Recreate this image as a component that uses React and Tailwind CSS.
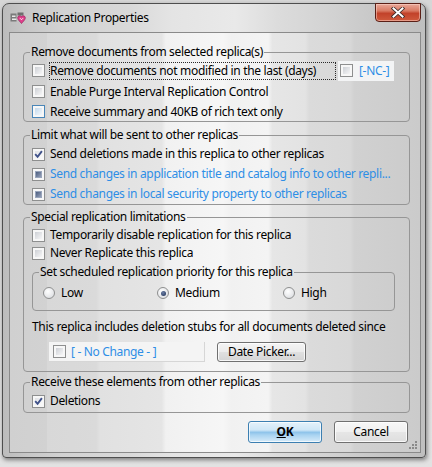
import React from "react";

function Check({ state = "off" }) {
  const outer = state === "hover" ? "border-[#4a86b8]" : "border-[#8e8f8f]";
  let inner;
  if (state === "mixed") {
    inner = <span className="h-full w-full border border-[#9aa6bc] bg-[linear-gradient(135deg,#4d5f80,#94a0b8)]" />;
  } else if (state === "hover") {
    inner = <span className="h-full w-full bg-[linear-gradient(135deg,#c4d9ec,#f3f8fc)]" />;
  } else if (state === "on") {
    inner = <span className="h-full w-full bg-[linear-gradient(135deg,#dfe1e5,#fbfbfb)]" />;
  } else {
    inner = <span className="h-full w-full bg-[linear-gradient(135deg,#cdd0d5,#f6f6f7)]" />;
  }
  return (
    <span className={`relative flex h-[13px] w-[13px] shrink-0 border ${outer} bg-[#f7f7f7] p-[2px]`}>
      {inner}
      {state === "on" && (
        <svg className="absolute left-0 top-0" width="11" height="11" viewBox="0 0 11 11">
          <path d="M2.2 5.2 L4.6 7.8 L8.9 2.2" fill="none" stroke="#3f5189" strokeWidth="1.9" strokeLinejoin="miter" />
        </svg>
      )}
    </span>
  );
}

function Radio({ on }) {
  return (
    <span className="flex h-[12px] w-[12px] shrink-0 items-center justify-center rounded-full border border-[#8e8f8f] bg-[radial-gradient(circle_at_40%_35%,#ffffff,#d5d7db)]">
      {on && <span className="h-[5px] w-[5px] rounded-full bg-[radial-gradient(circle_at_40%_35%,#6b7fa6,#1b2c52)]" />}
    </span>
  );
}

function Group({ title, className, children }) {
  return (
    <fieldset className={`rounded-[4px] border border-[#969696] pl-[8px] ${className}`}>
      <legend className="-ml-[2px] px-[1px] leading-[16px] whitespace-nowrap">{title}</legend>
      {children}
    </fieldset>
  );
}

function Row({ h, state, blue, children }) {
  return (
    <div className={`flex items-center gap-[4px] ${h}`}>
      <Check state={state} />
      <span className={`border border-transparent leading-[16px] whitespace-nowrap ${blue ? "text-[#2e8ee6]" : "text-black"}`}>
        {children}
      </span>
    </div>
  );
}

function WinButton({ className, children }) {
  return (
    <div
      className={`flex items-center justify-center rounded-[3px] border border-[#707070] bg-[linear-gradient(180deg,#f4f4f4_0%,#ececec_48%,#e0e0e0_52%,#d4d4d4_100%)] shadow-[inset_0_0_0_1px_rgba(255,255,255,0.8)] leading-[16px] ${className}`}
    >
      {children}
    </div>
  );
}

export default function App() {
  return (
    <div className="h-[467px] w-[432px] overflow-hidden bg-[linear-gradient(180deg,#d6d6d6,#e2e2e2)] pl-[2px] pt-[3px] font-['Noto_Sans',sans-serif] text-[12px] tracking-[-0.33px] text-black">
      <div className="flex h-[455px] w-[424px] flex-col rounded-b-[4px] rounded-t-[7px] border border-[#4e4e4e] bg-[linear-gradient(90deg,#bcbcbc_0%,#c8c8c8_6%,#d2d2d2_14%,#d9d9d9_30%,#e4e4e4_40%,#e9e9e9_55%,#dcdcdc_65%,#d2d2d2_78%,#c6c6c6_90%,#bfbfbf_100%)] shadow-[1px_2px_4px_rgba(0,0,0,0.45)]">
        {/* Title bar */}
        <div className="flex h-[28px] items-center pl-[7px]">
          <svg width="17" height="13" viewBox="0 0 17 13" className="shrink-0">
            <rect x="0.5" y="1.5" width="6" height="8" fill="#7a7a7a" />
            <rect x="2" y="3.5" width="3.5" height="1.5" fill="#e8e8e8" />
            <rect x="2" y="6.5" width="4.5" height="1.5" fill="#e8e8e8" />
            <rect x="7.5" y="0.5" width="6" height="3" fill="#6e6e6e" />
            <path d="M11.5 4.5 C12.8 3.2 15.5 3.8 15.3 6 C15.1 8 13 9.6 11.5 11.5 C10 9.6 7.9 8 7.7 6 C7.5 3.8 10.2 3.2 11.5 4.5 Z" fill="#e0408c" stroke="#9a1f5a" strokeWidth="0.7" />
            <path d="M10 6.2 L11.5 7.7 L13 6.2" fill="none" stroke="#ffffff" strokeWidth="0.9" />
          </svg>
          <span className="ml-[5px] leading-[16px] text-black">Replication Properties</span>
          <div className="-mt-px mb-auto ml-auto mr-[4px] flex h-[19px] w-[46px] items-center justify-center rounded-b-[4px] border border-[#5a1f16] bg-[linear-gradient(180deg,#e9a899_0%,#d97a63_40%,#c2422a_55%,#cf5a3d_100%)] shadow-[inset_0_0_0_1px_rgba(255,220,210,0.5)]">
            <svg width="14" height="11" viewBox="0 0 14 11">
              <path d="M2.5 1.5 L11.5 9.5 M11.5 1.5 L2.5 9.5" stroke="#3a2a28" strokeWidth="3.6" strokeLinecap="square" />
              <path d="M2.5 1.5 L11.5 9.5 M11.5 1.5 L2.5 9.5" stroke="#ffffff" strokeWidth="2" strokeLinecap="square" />
            </svg>
          </div>
        </div>

        {/* Content */}
        <div className="relative ml-[6px] mr-[4px] flex h-[421px] flex-col border border-[#8a8a8a] bg-[linear-gradient(90deg,#d0d0d0_0%,#d2d2d2_9%,#d8d8d8_9%,#dadada_21%,#e1e1e1_22%,#e5e5e5_37%,#f1f1f1_38%,#f6f6f6_52%,#f1f1f1_54%,#f4f4f4_63%,#e6e6e6_64%,#e3e3e3_72%,#dbdbdb_73%,#d8d8d8_83%,#d1d1d1_84%,#cbcbcb_100%)] pl-[13px] pr-[10px] pt-[11px]">
          {/* Group 1 */}
          <Group title="Remove documents from selected replica(s)">
            <div className="flex h-[21px] items-center">
              <Check state="off" />
              <span className="ml-[4px] flex h-[18px] w-[287px] items-center border border-dotted border-[#2a2a2a] leading-[16px] whitespace-nowrap">
                Remove documents not modified in the last (days)
              </span>
              <div className="ml-[2px] flex h-[20px] w-[56px] items-center gap-[6px] bg-[#f3f4f5] pl-[2px]">
                <Check state="off" />
                <span className="leading-[16px] text-[#2e8ee6]">[-NC-]</span>
              </div>
            </div>
            <Row h="h-[21px]" state="off">Enable Purge Interval Replication Control</Row>
            <Row h="h-[19px]" state="hover">Receive summary and 40KB of rich text only</Row>
          </Group>

          {/* Group 2 */}
          <Group title="Limit what will be sent to other replicas" className="mt-[5px]">
            <div className="pt-px">
              <Row h="h-[20px]" state="on">Send deletions made in this replica to other replicas</Row>
              <Row h="h-[20px]" state="mixed" blue>Send changes in application title and catalog info to other repli...</Row>
              <Row h="h-[20px]" state="mixed" blue>Send changes in local security property to other replicas</Row>
            </div>
          </Group>

          {/* Group 3 */}
          <Group title="Special replication limitations" className="mt-[4px] pb-[9px]">
            <div className="pt-px">
              <Row h="h-[18px]" state="off">Temporarily disable replication for this replica</Row>
              <Row h="h-[18px]" state="off">Never Replicate this replica</Row>
            </div>
            <Group title="Set scheduled replication priority for this replica" className="mr-[14px] mt-[2px] pb-[7px]">
              <div className="flex h-[20px] items-center pl-[2px] pt-[3px] box-content">
                <div className="flex w-[114px] items-center gap-[6px]">
                  <Radio />
                  <span className="leading-[16px]">Low</span>
                </div>
                <div className="flex w-[126px] items-center gap-[6px]">
                  <Radio on />
                  <span className="leading-[16px]">Medium</span>
                </div>
                <div className="flex items-center gap-[6px]">
                  <Radio />
                  <span className="leading-[16px]">High</span>
                </div>
              </div>
            </Group>
            <div className="mt-[8px] leading-[16px] whitespace-nowrap">
              This replica includes deletion stubs for all documents deleted since
            </div>
            <div className="mt-[7px] flex h-[20px] items-center pl-[17px]">
              <div className="flex h-[20px] w-[156px] items-center gap-[5px] border-b border-r border-[#d6d6d6] bg-[#f4f4f4] pl-[4px]">
                <Check state="off" />
                <span className="leading-[16px] text-[#2e8ee6]">[ - No Change - ]</span>
              </div>
              <WinButton className="ml-[12px] h-[20px] w-[89px]">Date Picker...</WinButton>
            </div>
          </Group>

          {/* Group 4 */}
          <Group title="Receive these elements from other replicas" className="mt-[2px] pb-[2px]">
            <div className="pt-[2px]">
              <Row h="h-[18px]" state="on">Deletions</Row>
            </div>
          </Group>

          {/* Buttons */}
          <div className="mr-[2px] mt-[8px] flex justify-end gap-[12px]">
            <div className="flex h-[22px] w-[74px] items-center justify-center rounded-[3px] border border-[#3c7fb1] bg-[linear-gradient(180deg,#e4f2fb_0%,#cfe7f7_40%,#8fc4ea_52%,#a9d3f1_65%,#d6ebf9_100%)] shadow-[inset_0_0_0_1px_rgba(255,255,255,0.7)] font-bold leading-[16px]">
              <span><span className="underline">O</span>K</span>
            </div>
            <WinButton className="h-[22px] w-[74px] bg-[linear-gradient(180deg,#f7f7f7_0%,#f0f0f0_50%,#e6e6e6_52%,#dedede_100%)]">Cancel</WinButton>
          </div>

          {/* Resize grip */}
          <svg className="absolute bottom-[2px] right-[2px]" width="11" height="11" viewBox="0 0 11 11">
            <g fill="#8a8a8a">
              <rect x="8" y="2" width="2" height="2" />
              <rect x="5" y="5" width="2" height="2" />
              <rect x="8" y="5" width="2" height="2" />
              <rect x="2" y="8" width="2" height="2" />
              <rect x="5" y="8" width="2" height="2" />
              <rect x="8" y="8" width="2" height="2" />
            </g>
          </svg>
        </div>
      </div>
    </div>
  );
}
